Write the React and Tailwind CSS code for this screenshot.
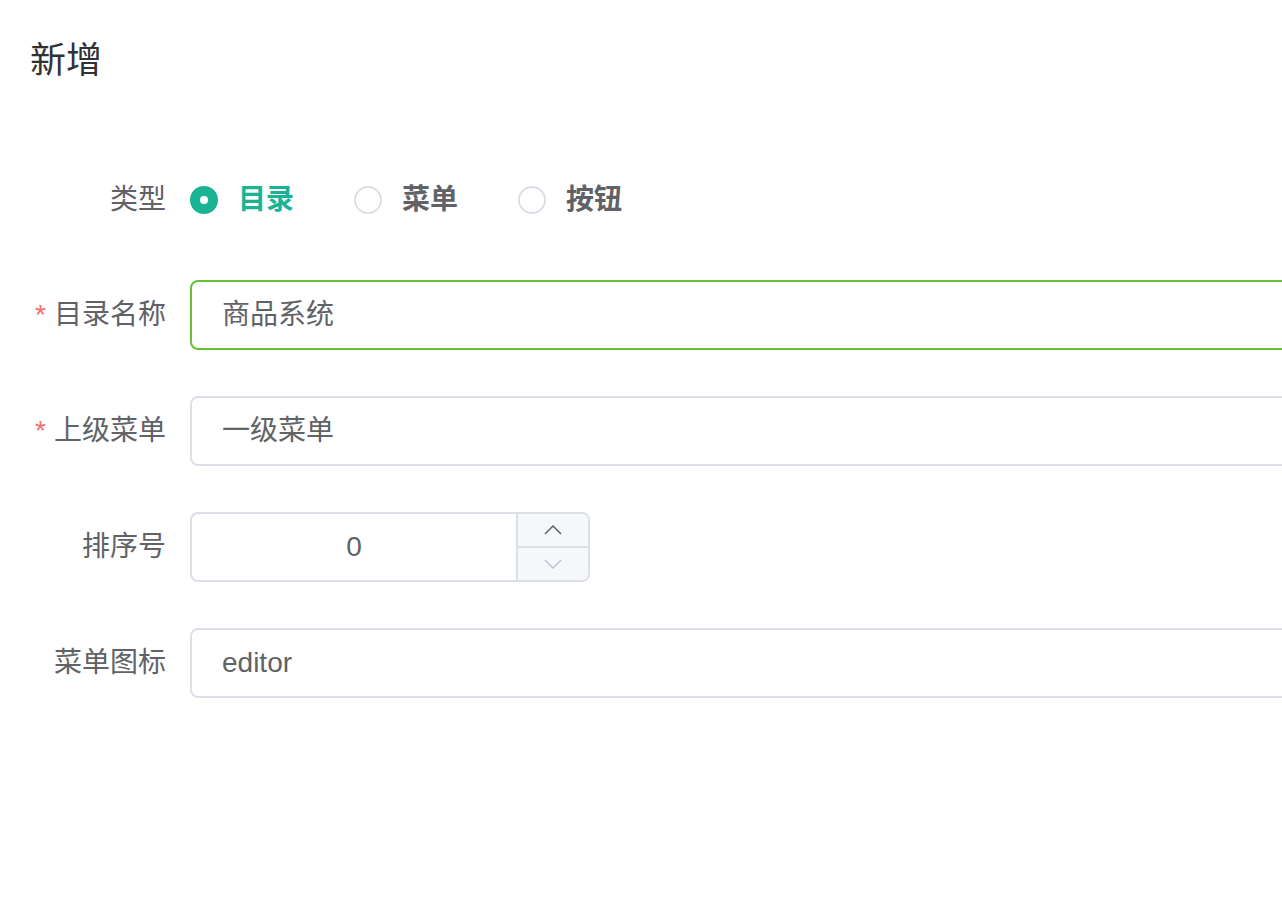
import React, { useState } from "react";

const font = { fontFamily: '"Liberation Sans", "Noto Sans CJK SC", sans-serif' };

const Radio = ({ label, checked, onClick }) => (
  <label onClick={onClick} className="flex items-center cursor-pointer mr-[60px]">
    {checked ? (
      <span className="w-[28px] h-[28px] rounded-full bg-[#1ab394] border-2 border-[#1ab394] flex items-center justify-center">
        <span className="w-[8px] h-[8px] rounded-full bg-white" />
      </span>
    ) : (
      <span className="w-[28px] h-[28px] rounded-full bg-white border-2 border-[#dcdfe6]" />
    )}
    <span
      className={`ml-[20px] text-[28px] font-bold ${checked ? "text-[#1ab394]" : "text-[#606266]"}`}
    >
      {label}
    </span>
  </label>
);

const Row = ({ label, required, children, className = "mb-[46px]" }) => (
  <div className={`flex items-center h-[70px] ${className}`}>
    <div className="w-[190px] shrink-0 pr-[24px] text-right text-[28px] text-[#606266] leading-[70px]">
      {required && <span className="text-[#f56c6c] mr-[8px]">*</span>}
      {label}
    </div>
    {children}
  </div>
);

const TextInput = ({ value, focused }) => (
  <div
    className={`w-[1200px] shrink-0 h-[70px] rounded-[8px] border-2 flex items-center px-[30px] text-[28px] text-[#606266] ${
      focused ? "border-[#67c23a]" : "border-[#dcdfe6]"
    }`}
  >
    {value}
  </div>
);

export default function App() {
  const [type, setType] = useState("dir");

  return (
    <div className="w-full h-[914px] bg-white overflow-hidden" style={font}>
      <div className="pl-[30px] pt-[37px] text-[36px] leading-[48px] text-[#303133]">新增</div>

      <div className="mt-[80px]">
        <Row label="类型" className="mb-[45px]">
          <Radio label="目录" checked={type === "dir"} onClick={() => setType("dir")} />
          <Radio label="菜单" checked={type === "menu"} onClick={() => setType("menu")} />
          <Radio label="按钮" checked={type === "btn"} onClick={() => setType("btn")} />
        </Row>

        <Row label="目录名称" required>
          <TextInput value="商品系统" focused />
        </Row>

        <Row label="上级菜单" required>
          <TextInput value="一级菜单" />
        </Row>

        <Row label="排序号">
          <div className="w-[400px] h-[70px] rounded-[8px] border-2 border-[#dcdfe6] flex overflow-hidden">
            <div className="flex-1 flex items-center justify-center text-[28px] text-[#606266]">0</div>
            <div className="w-[72px] border-l-2 border-[#dcdfe6] bg-[#f5f7fa] flex flex-col">
              <div className="flex-1 flex items-center justify-center border-b-2 border-[#dcdfe6]">
                <svg width="18" height="10" viewBox="0 0 18 10" fill="none">
                  <path d="M1 9L9 1L17 9" stroke="#606266" strokeWidth="1.5" />
                </svg>
              </div>
              <div className="flex-1 flex items-center justify-center">
                <svg width="18" height="10" viewBox="0 0 18 10" fill="none">
                  <path d="M1 1L9 9L17 1" stroke="#c0c4cc" strokeWidth="1.5" />
                </svg>
              </div>
            </div>
          </div>
        </Row>

        <Row label="菜单图标">
          <TextInput value="editor" />
        </Row>
      </div>
    </div>
  );
}
